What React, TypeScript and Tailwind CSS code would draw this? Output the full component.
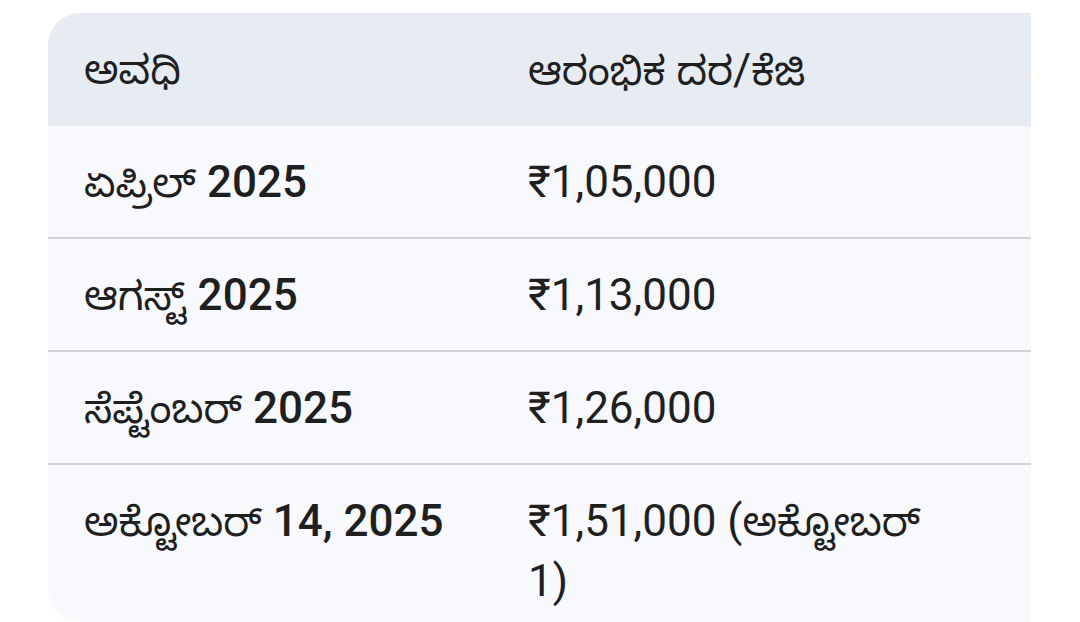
const rows = [
  { period: "ಏಪ್ರಿಲ್ 2025", rate: "₹1,05,000", change: "—" },
  { period: "ಆಗಸ್ಟ್ 2025", rate: "₹1,13,000", change: "+7.6%" },
  { period: "ಸೆಪ್ಟೆಂಬರ್ 2025", rate: "₹1,26,000", change: "+11.5%" },
  { period: "ಅಕ್ಟೋಬರ್ 14, 2025", rate: "₹1,51,000 (ಅಕ್ಟೋಬರ್ 1)", change: "+19.8%" },
];

// Kannada runs and Latin/digit runs need different sizes to match the source fonts
function Mixed({ text, strong = false }: { text: string; strong?: boolean }) {
  const parts = text.split(/([\u0C80-\u0CFF]+)/).filter(Boolean);
  return (
    <>
      {parts.map((p, i) =>
        /[\u0C80-\u0CFF]/.test(p) ? (
          <span key={i} className="text-[40px] leading-none font-normal">{p}</span>
        ) : (
          <span key={i} className={strong ? "text-[44px] leading-none font-medium" : "text-[44px] leading-none font-normal"}>
            {p}
          </span>
        ),
      )}
    </>
  );
}

export default function App() {
  return (
    <div
      className="h-[622px] w-[1080px] overflow-hidden bg-white pl-[48px] pt-[13px] text-[#1f1f1f]"
      style={{ fontFamily: "Roboto, 'Noto Sans', 'Noto Sans Kannada', sans-serif" }}
    >
      <div className="w-[983px] overflow-hidden rounded-l-[32px]">
        <table className="w-[1300px] table-fixed border-collapse text-[16px] leading-[57px]">
          <colgroup>
            <col className="w-[444px]" />
            <col className="w-[502px]" />
            <col className="w-[354px]" />
          </colgroup>
          <thead>
            <tr className="bg-[#e7ebf2]">
              <th className="px-[36px] pt-[35px] pb-[18px] text-left font-normal"><Mixed text="ಅವಧಿ" /></th>
              <th className="px-[36px] pt-[35px] pb-[18px] text-left font-normal"><Mixed text="ಆರಂಭಿಕ ದರ/ಕೆಜಿ" /></th>
              <th className="px-[36px] pt-[35px] pb-[18px] text-left font-normal"><Mixed text="ಏರಿಕೆ" /></th>
            </tr>
          </thead>
          <tbody className="bg-[#f7f9fc]">
            {rows.map((r, i) => {
              const last = i === rows.length - 1;
              const pad = last ? "px-[36px] pt-[34px] pb-[3px] align-top" : "px-[36px] pt-[34px] pb-[17px] align-top";
              return (
                <tr key={r.period} className={last ? "" : "border-b-2 border-[#d0d2d6]"}>
                  <td className={pad}><Mixed text={r.period} strong /></td>
                  <td className={pad}><Mixed text={r.rate} /></td>
                  <td className={pad}><Mixed text={r.change} /></td>
                </tr>
              );
            })}
          </tbody>
        </table>
      </div>
    </div>
  );
}
